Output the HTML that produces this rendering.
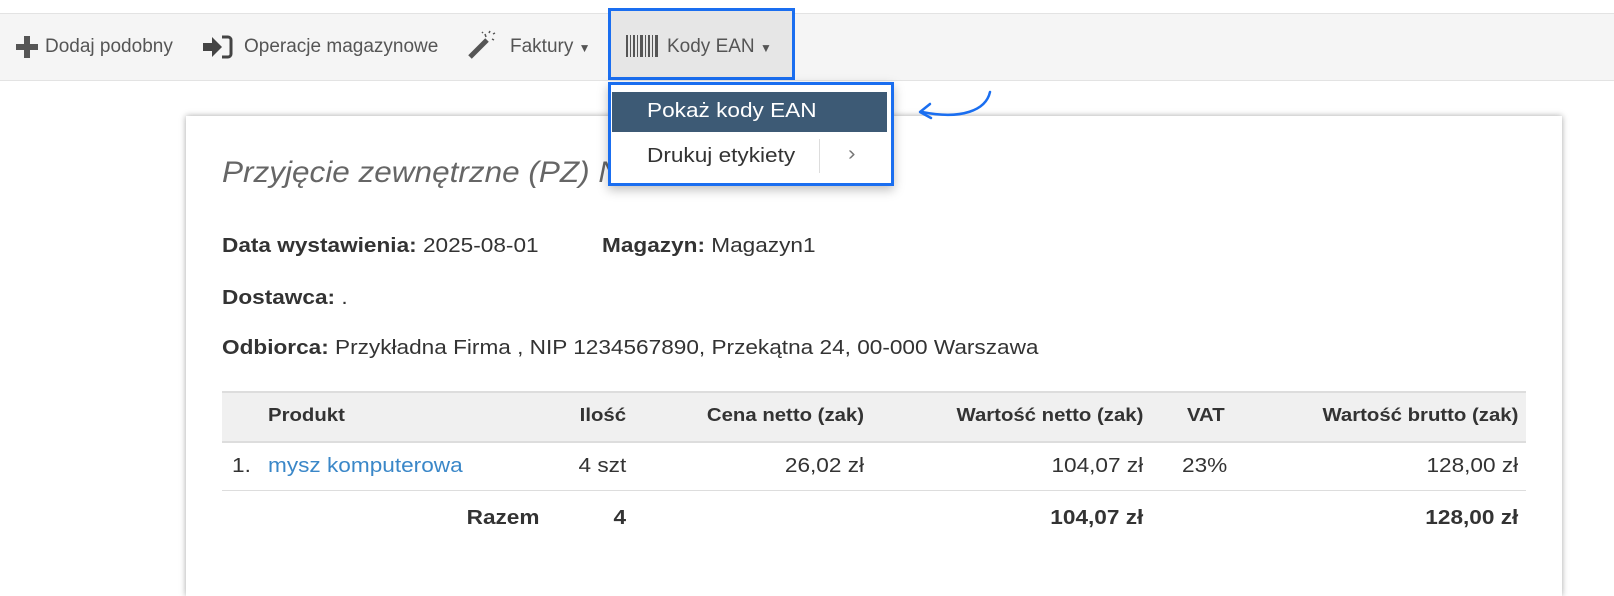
<!DOCTYPE html>
<html><head><meta charset="utf-8"><style>
body{margin:0;width:1614px;height:566px;background:#fff;font-family:"Liberation Sans",sans-serif;overflow:hidden;position:relative;color:#333}
.bar{position:absolute;left:0;top:13px;width:1614px;height:66px;background:#f5f5f5;border-top:1px solid #e3e3e3;border-bottom:1px solid #e3e3e3}
.t{position:absolute;font-size:19px;color:#555;top:36px}
.card{position:absolute;left:186px;top:116px;width:1376px;height:480px;background:#fff;box-shadow:0 0 6px rgba(0,0,0,.35)}
.a{position:absolute;font-size:20px;color:#333;white-space:nowrap;transform:scaleX(1.13);transform-origin:left center}
.a.r{transform-origin:right center}
b{font-weight:bold}
.r{text-align:right}
</style></head><body>
<div class="bar"></div>
<div style="position:absolute;left:16px;top:36px;width:22px;height:22px">
<div style="position:absolute;left:8px;top:0;width:6px;height:22px;background:#555"></div>
<div style="position:absolute;left:0;top:8px;width:22px;height:6px;background:#555"></div></div>
<div class="t" style="left:45px">Dodaj podobny</div>
<svg style="position:absolute;left:203px;top:35px" width="30" height="24" viewBox="0 0 30 24"><path d="M0 8h9V2l10 10-10 10v-6H0z" fill="#444"/><path d="M19 2h6a3 3 0 0 1 3 3v14a3 3 0 0 1-3 3h-6" stroke="#444" stroke-width="3" fill="none"/></svg>
<div class="t" style="left:244px">Operacje magazynowe</div>
<svg style="position:absolute;left:467px;top:30px" width="30" height="30" viewBox="0 0 30 30"><path d="M3 27L20 10" stroke="#555" stroke-width="5"/><path d="M18 4l1 3M25 9l2 1M22 3l1-2M26 4l2-1M15 2l1 1" stroke="#555" stroke-width="1.5"/></svg>
<div class="t" style="left:510px">Faktury <span style="font-size:12px">▼</span></div>
<div style="position:absolute;left:608px;top:8px;width:181px;height:66px;background:#e6e6e6;border:3px solid #1a6ef0"></div>
<svg style="position:absolute;left:626px;top:35px" width="34" height="22"><g fill="#555"><rect x="0" width="2" height="22"/><rect x="4" width="1" height="22"/><rect x="7" width="2" height="22"/><rect x="11" width="1" height="22"/><rect x="14" width="3" height="22"/><rect x="19" width="1" height="22"/><rect x="22" width="2" height="22"/><rect x="26" width="1" height="22"/><rect x="29" width="3" height="22"/></g></svg>
<div class="t" style="left:667px">Kody EAN <span style="font-size:12px">▼</span></div>
<div class="card"></div>
<div class="a" style="left:222px;top:156px;font-size:30px;font-style:italic;color:#666;transform:scaleX(1.05)">Przyjęcie zewnętrzne (PZ) N</div>
<div class="a" style="left:222px;top:235px"><b>Data wystawienia:</b> 2025-08-01</div>
<div class="a" style="left:602px;top:235px"><b>Magazyn:</b> Magazyn1</div>
<div class="a" style="left:222px;top:287px"><b>Dostawca:</b> .</div>
<div class="a" style="left:222px;top:337px"><b>Odbiorca:</b> Przykładna Firma , NIP 1234567890, Przekątna 24, 00-000 Warszawa</div>
<div style="position:absolute;left:222px;top:391px;width:1304px;height:48px;background:#f0f0f0;border-top:2px solid #ddd;border-bottom:2px solid #ddd"></div>
<div style="position:absolute;left:222px;top:490px;width:1304px;height:1px;background:#ddd"></div>
<div class="a" style="left:268px;top:405px;font-size:18px"><b>Produkt</b></div>
<div class="a r" style="right:988px;top:405px;font-size:18px"><b>Ilość</b></div>
<div class="a r" style="right:750px;top:405px;font-size:18px"><b>Cena netto (zak)</b></div>
<div class="a r" style="right:471px;top:405px;font-size:18px"><b>Wartość netto (zak)</b></div>
<div class="a" style="left:1187px;top:405px;font-size:18px"><b>VAT</b></div>
<div class="a r" style="right:96px;top:405px;font-size:18px"><b>Wartość brutto (zak)</b></div>
<div class="a" style="left:232px;top:455px">1.</div>
<div class="a" style="left:268px;top:455px;color:#3a87c8">mysz komputerowa</div>
<div class="a r" style="right:988px;top:455px">4 szt</div>
<div class="a r" style="right:750px;top:455px">26,02 zł</div>
<div class="a r" style="right:471px;top:455px">104,07 zł</div>
<div class="a" style="left:1182px;top:455px">23%</div>
<div class="a r" style="right:96px;top:455px">128,00 zł</div>
<div class="a r" style="right:1075px;top:507px"><b>Razem</b></div>
<div class="a r" style="right:988px;top:507px"><b>4</b></div>
<div class="a r" style="right:471px;top:507px"><b>104,07 zł</b></div>
<div class="a r" style="right:96px;top:507px"><b>128,00 zł</b></div>
<div style="position:absolute;left:608px;top:82px;width:280px;height:98px;background:#fff;border:3px solid #1a6ef0;box-shadow:0 4px 10px rgba(0,0,0,.25)"></div>
<div style="position:absolute;left:612px;top:92px;width:275px;height:40px;background:#3d5a75"></div>
<div class="a" style="left:647px;top:100px;color:#fff">Pokaż kody EAN</div>
<div class="a" style="left:647px;top:145px">Drukuj etykiety</div>
<div style="position:absolute;left:819px;top:139px;width:1px;height:34px;background:#ddd"></div>
<div class="a" style="left:848px;top:143px;color:#777">›</div>
<svg style="position:absolute;left:912px;top:88px" width="85" height="36" viewBox="0 0 85 36"><path d="M78 4C74 22 50 32 10 24" stroke="#1a6ef0" stroke-width="2.5" fill="none" stroke-linecap="round"/><path d="M18 16L8 24l11 6" stroke="#1a6ef0" stroke-width="2.5" fill="none" stroke-linecap="round" stroke-linejoin="round"/></svg>
</body></html>
